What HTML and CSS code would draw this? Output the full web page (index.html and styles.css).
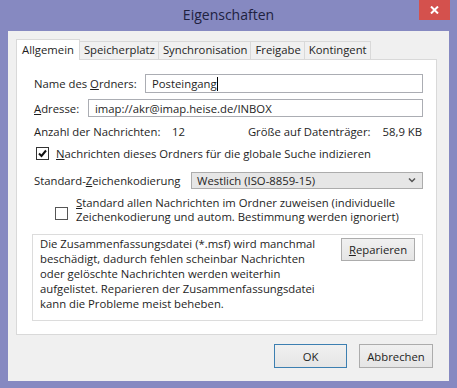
FILE: index.html
```html
<!DOCTYPE html>
<html lang="de">
<head>
    <meta charset="UTF-8">
    <title>Eigenschaften</title>
    <link rel="stylesheet" href="styles.css">
</head>
<body>
    <div class="window">
        <div class="titlebar">
            <div class="title">Eigenschaften</div>
            <div class="close">
                <svg width="9" height="8" viewBox="0 0 9 8">
                    <path d="M1 0.5 L8 7.5 M8 0.5 L1 7.5" stroke="#fff" stroke-width="2"/>
                </svg>
            </div>
        </div>
        <div class="client">
            <div class="tabs">
                <div class="tab active">Allgemein</div>
                <div class="tab">Speicherplatz</div>
                <div class="tab">Synchronisation</div>
                <div class="tab">Freigabe</div>
                <div class="tab">Kontingent</div>
            </div>
            <div class="panel">
                <div class="row name-row">
                    <label class="label-name">Name des <u>O</u>rdners:</label>
                    <div class="textbox">Posteingang<span class="caret"></span></div>
                </div>
                <div class="row addr-row">
                    <label class="label-addr"><u>A</u>dresse:</label>
                    <div class="textbox">imap://akr@imap.heise.de/INBOX</div>
                </div>
                <div class="row info-row">
                    <span class="info-label">Anzahl der Nachrichten:</span>
                    <span>12</span>
                    <span class="info-right">Größe auf Datenträger:</span>
                    <span class="info-size">58,9 KB</span>
                </div>
                <div class="row check-row">
                    <span class="checkbox checked">
                        <svg width="11" height="11" viewBox="0 0 11 11">
                            <path d="M2 5.5 L4.5 8 L9 2.5" fill="none" stroke="#111" stroke-width="2"/>
                        </svg>
                    </span>
                    <span><u>N</u>achrichten dieses Ordners für die globale Suche indizieren</span>
                </div>
                <div class="row charset-row">
                    <label class="label-charset">Standard-<u>Z</u>eichenkodierung</label>
                    <div class="select">
                        <span>Westlich (ISO-8859-15)</span>
                        <svg width="8" height="5" viewBox="0 0 8 5">
                            <path d="M1 0.5 L4 3.5 L7 0.5" fill="none" stroke="#555" stroke-width="1.5"/>
                        </svg>
                    </div>
                </div>
                <div class="row apply-row">
                    <span class="checkbox"></span>
                    <span class="apply-text"><u>S</u>tandard allen Nachrichten im Ordner zuweisen (individuelle<br>Zeichenkodierung und autom. Bestimmung werden ignoriert)</span>
                </div>
                <div class="groupbox">
                    <p class="msf-text">Die Zusammenfassungsdatei (*.msf) wird manchmal<br>beschädigt, dadurch fehlen scheinbar Nachrichten<br>oder gelöschte Nachrichten werden weiterhin<br>aufgelistet. Reparieren der Zusammenfassungsdatei<br>kann die Probleme meist beheben.</p>
                    <button class="btn repair"><u>R</u>eparieren</button>
                </div>
            </div>
            <div class="actions">
                <button class="btn default">OK</button>
                <button class="btn">Abbrechen</button>
            </div>
        </div>
    </div>
</body>
</html>
```

FILE: styles.css
```css
body {
    margin: 0;
    font-family: "Open Sans", "Noto Sans", sans-serif;
    font-size: 11.3px;
    color: #1e1e1e;
}

.window {
    width: 457px;
    height: 388px;
    background: #8689c1;
    display: flex;
    flex-direction: column;
}

.titlebar {
    height: 31px;
    display: grid;
    grid-template-columns: 1fr auto 1fr;
    align-items: start;
}

.title {
    grid-column: 2;
    font-size: 14px;
    line-height: 30px;
    color: #20213f;
}

.close {
    grid-column: 3;
    justify-self: end;
    margin-right: 7px;
    width: 31px;
    height: 20px;
    background: #d4514d;
    display: flex;
    align-items: center;
    justify-content: center;
}

.client {
    flex: 1;
    margin: 0 8px 7px 8px;
    background: #f0f0f0;
    padding: 8px 12px 0 8px;
    display: flex;
    flex-direction: column;
}

/* tabs */
.tabs {
    display: flex;
    align-items: flex-end;
    height: 20px;
}

.tab {
    height: 17px;
    line-height: 16px;
    padding: 0 3px 0 4px;
    border: 1px solid #d9d9d9;
    border-bottom: none;
    margin-right: -1px;
    background: #f0f0f0;
    white-space: nowrap;
}

.tab.active {
    height: 20px;
    line-height: 20px;
    background: #fff;
    position: relative;
    z-index: 1;
    margin-bottom: -1px;
    padding: 0 5px;
}

.panel {
    height: 274px;
    background: #fff;
    border: 1px solid #d9d9d9;
    padding: 0 13px 0 17px;
}

.row {
    display: flex;
    align-items: center;
}

.textbox {
    flex: 1;
    border: 1px solid #abadb3;
    background: #fff;
    padding: 0 6px;
    display: flex;
    align-items: center;
}

.name-row {
    margin-top: 14px;
}

.name-row .textbox {
    height: 17px;
}

.caret {
    width: 1px;
    height: 14px;
    background: #000;
}

.label-name {
    width: 111px;
}

.addr-row {
    margin-top: 6px;
}

.addr-row .textbox {
    height: 16px;
}

.label-addr {
    width: 54px;
}

.info-row {
    margin-top: 7px;
    height: 15px;
}

.info-label {
    width: 138px;
}

.info-right {
    margin-left: auto;
    margin-right: 12px;
}

.info-size {
    margin-right: 1px;
}

.check-row {
    margin-top: 7px;
    height: 15px;
}

.checkbox {
    width: 11px;
    height: 11px;
    border: 1px solid #333;
    background: #fff;
    margin-left: 2px;
    margin-right: 7px;
    display: flex;
    flex-shrink: 0;
}

.charset-row {
    margin-top: 11px;
}

.label-charset {
    width: 157px;
}

.select {
    flex: 1;
    height: 15px;
    border: 1px solid #acacac;
    background: #e6e6e6;
    padding: 0 6px 0 5px;
    display: flex;
    align-items: center;
    justify-content: space-between;
}

.apply-row {
    margin-top: 7px;
    align-items: flex-start;
}

.apply-row .checkbox {
    margin-left: 21px;
    margin-right: 8px;
    margin-top: 11px;
    border-color: #555;
}

.apply-text {
    line-height: 14px;
}

.groupbox {
    margin: 10px 0 0 -2px;
    height: 85px;
    border: 1px solid #dcdcdc;
    padding: 0 7px 0 7px;
    display: flex;
    justify-content: space-between;
    align-items: flex-start;
}

.msf-text {
    margin: 1px 0 0 0;
    line-height: 15px;
}

.btn {
    font-family: inherit;
    font-size: inherit;
    color: #1e1e1e;
    background: linear-gradient(#f0f0f0, #e5e5e5);
    border: 1px solid #acacac;
    border-radius: 0;
    padding: 0;
}

.repair {
    width: 74px;
    height: 23px;
    margin-top: 3px;
}

.actions {
    display: flex;
    justify-content: flex-end;
    gap: 12px;
    margin-top: 9px;
    padding-right: 4px;
}

.actions .btn {
    width: 74px;
    height: 24px;
}

.actions .default {
    width: 73px;
    border-color: #3c7fb1;
}
```
